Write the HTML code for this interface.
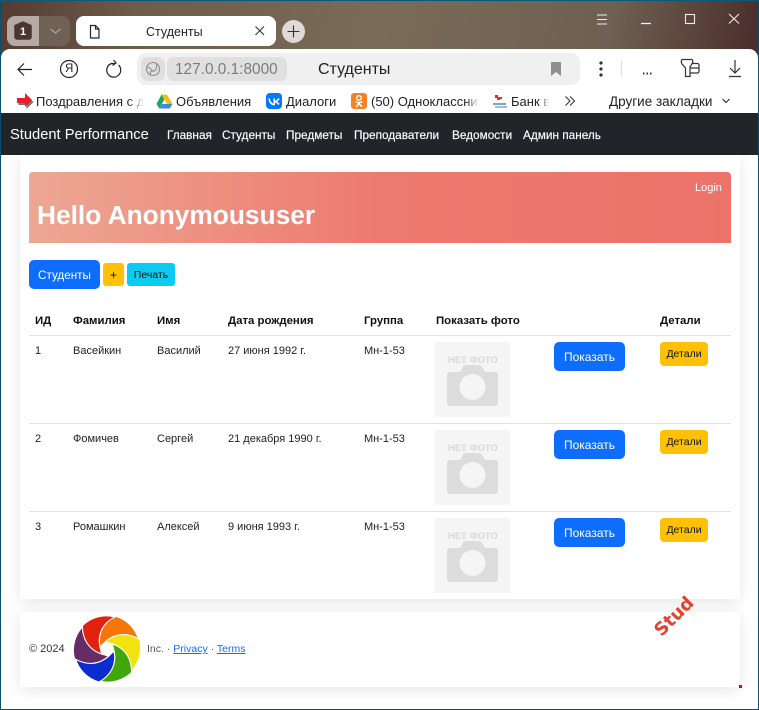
<!DOCTYPE html>
<html lang="ru"><head><meta charset="utf-8"><title>Студенты</title>
<style>
*{box-sizing:border-box}
html,body{margin:0;padding:0;width:759px;height:710px;overflow:hidden;background:#fff;font-family:"Liberation Sans","Noto Sans CJK JP",sans-serif;color:#212529}
.t{position:absolute;white-space:nowrap;line-height:16px}
.a{position:absolute}
.chrome{left:0;top:0;width:759px;height:60px;background:linear-gradient(100deg,#553a30 0%,#6e5c4c 18%,#7a6b58 50%,#6e6052 80%,#4a2c2a 100%)}
.tool{left:1px;top:49px;width:757px;height:64px;background:#fff;border-radius:9px 9px 0 0}
.nav{left:1px;top:113px;width:757px;height:42px;background:#212529}
.nl{color:#fff;font-size:11.8px;top:127px;-webkit-text-stroke:.15px #fff}
.card{background:#fff;box-shadow:0 3px 14px rgba(0,0,0,.1)}
.th{font-weight:bold;font-size:11.4px;color:#111;top:313px}
.td{font-size:11px;color:#222}
.line{left:29px;width:702px;height:1px;background:#dee2e6}
.btn{background:#0d6efd;color:#fff;border-radius:5px;text-align:center;font-size:12px}
.y{background:#ffc107;color:#111;border-radius:4px;text-align:center;font-size:10.5px}
.bk{font-size:13px;color:#222;top:94px}
.nf{font-size:9.3px;font-weight:bold;color:#d9d9d9;letter-spacing:.1px}
</style></head><body>
<div class="a chrome"></div>
<div class="a" style="left:7px;top:16px;width:32px;height:30px;background:#b5aaa5;border-radius:8px 0 0 8px"></div>
<div class="a" style="left:39px;top:16px;width:31px;height:30px;background:#6f6156;border-radius:0 8px 8px 0"></div>
<svg class="a" style="left:0;top:0" width="120" height="50"><path d="M15 25.500 23 22 31 25.500V37a2 2 0 0 1-2 2H17a2 2 0 0 1-2-2Z" fill="#4a362e" stroke="#4a362e" stroke-linejoin="round" stroke-width="1.5"/><path d="M50.500 29 55.500 33 60.500 29" fill="none" stroke="#a89e96" stroke-width="1.300"/></svg>
<span class="t" style="left:19px;top:24px;width:8px;text-align:center;color:#fff;font-size:11px;font-weight:bold">1</span>
<div class="a" style="left:76px;top:16px;width:200px;height:30px;background:#fff;border-radius:8px"></div>
<svg class="a" style="left:85px;top:22px" width="18" height="18" fill="none" stroke="#1f2933" stroke-width="1.200"><path d="M5.500 3.500H10.500L14 7V16H5.500ZM10.500 3.500V7H14"/></svg>
<span class="t" style="left:146px;top:24px;font-size:12.500px;color:#222">Студенты</span>
<svg class="a" style="left:254px;top:24px" width="12" height="14" stroke="#333" stroke-width="1.100"><path d="M1.500 2.500 10 11M10 2.500 1.500 11"/></svg>
<div class="a" style="left:282px;top:20px;width:23px;height:23px;border-radius:50%;background:#dfdad6"></div>
<svg class="a" style="left:282px;top:20px" width="23" height="23" stroke="#333" stroke-width="1.100"><path d="M11.500 5.500V17.500M5.500 11.500H17.500"/></svg>
<svg class="a" style="left:590px;top:8px" width="165" height="24" fill="none" stroke="#f2eeea" stroke-width="1.100"><path d="M7 7H17M7 11.500H17M7 16H17"/><path d="M51 15.500H61" stroke-width="1.300"/><rect x="95.500" y="6.500" width="9" height="9"/><path d="M139 6 149 15.500M149 6 139 15.500"/></svg>

<div class="a tool"></div>
<svg class="a" style="left:14px;top:58px" width="24" height="24" fill="none" stroke="#222" stroke-width="1.200"><path d="M4.500 11.500H18M10 5.500 4 11.500 10 17.500"/></svg>
<svg class="a" style="left:58px;top:58px" width="22" height="22" fill="none" stroke="#222" stroke-width="1.200"><circle cx="11" cy="11" r="8.500"/></svg>
<span class="t" style="left:65px;top:61px;font-size:11.500px;color:#222">Я</span>
<svg class="a" style="left:102px;top:58px" width="24" height="24" fill="none" stroke="#222" stroke-width="1.200"><path d="M16.500 7A7 7 0 1 1 9.500 5.500L12.500 5.500M11.500 2 14 5 10.500 7.500"/></svg>
<div class="a" style="left:137px;top:53px;width:443px;height:32px;background:#f0f0f0;border-radius:9px"></div>
<div class="a" style="left:141px;top:57px;width:24px;height:24px;background:#dfdfdf;border-radius:7px"></div>
<svg class="a" style="left:141px;top:57px" width="24" height="24" fill="none" stroke="#8d8d8d" stroke-width="1.100"><circle cx="12" cy="12" r="6.500"/><path d="M6 10C9 10 10 13 12 14S17 10 15 6M9.500 18C9 15 9.500 14 12 14"/></svg>
<div class="a" style="left:167px;top:57px;width:120px;height:24px;background:#e0e0e0;border-radius:7px"></div>
<span class="t" style="left:175px;top:62px;font-size:15.400px;color:#7c7c7c">127.0.0.1:8000</span>
<span class="t" style="left:318px;top:62px;font-size:16px;color:#222">Студенты</span>
<svg class="a" style="left:551px;top:62px" width="11" height="14"><path d="M0 0H10V14L5 10 0 14Z" fill="#8f8f8f"/></svg>
<svg class="a" style="left:590px;top:55px" width="165" height="30" fill="none" stroke="#333" stroke-width="1.200"><circle cx="11" cy="8" r="1" fill="#333"/><circle cx="11" cy="14" r="1" fill="#333"/><circle cx="11" cy="20" r="1" fill="#333"/><path d="M31.500 6V22" stroke="#ddd"/><path d="M53 18.500H54.500M56.500 18.500H58M60 18.500H61.500" stroke-width="2"/><path d="M92.500 4.500H101.500C103 4.500 103 6 102.500 8L100 12V21.500H95.500V13L92 9C91 7 91 4.500 92.500 4.500Z"/><path d="M101.500 8.500H107.500A1.500 1.500 0 0 1 109 10V16.500A1.500 1.500 0 0 1 107.500 18H100M100 13H109"/><path d="M145 5V18M140 13 145 18 150 13M139 21.500H151"/></svg>

<svg class="a" style="left:17px;top:93px" width="18" height="17"><path d="M0 5H8V0L15 7 8 14V10H0Z" fill="#777" transform="translate(1.500 2)"/><path d="M0 5H8V0L15 7 8 14V10H0Z" fill="#ee1c25"/></svg>
<span class="t bk" style="left:36px;width:108px;overflow:hidden;-webkit-mask-image:linear-gradient(90deg,#000 85%,transparent)">Поздравления с днём</span>
<svg class="a" style="left:156px;top:94px" width="17" height="15"><path d="M5.500 0.500H11L16.500 10H11Z" fill="#fbbc04"/><path d="M5.500 0.500 0.500 10 3.300 14.500 8.300 5.500Z" fill="#1fa463"/><path d="M3.300 14.500H13.800L16.500 10H6Z" fill="#4285f4"/></svg>
<span class="t bk" style="left:176px">Объявления</span>
<svg class="a" style="left:266px;top:93px" width="16" height="16"><rect width="16" height="16" rx="4" fill="#0077ff"/><path d="M3 5.500C3.500 9 5.500 11.500 8.200 11.500V5.500M13 5.500C12 7.300 10.500 8.300 8.200 8.500C10.500 8.800 12 10 13 11.500" fill="none" stroke="#fff" stroke-width="1.600"/></svg>
<span class="t bk" style="left:286px">Диалоги</span>
<svg class="a" style="left:351px;top:93px" width="16" height="16"><rect width="16" height="16" rx="3" fill="#f58220"/><circle cx="8" cy="5" r="2.300" fill="none" stroke="#fff" stroke-width="1.400"/><path d="M4.500 8.500C6.500 10 9.500 10 11.500 8.500M8 9.800V10.500M5 14 8 10.500 11 14" fill="none" stroke="#fff" stroke-width="1.400"/></svg>
<span class="t bk" style="left:371px;width:108px;overflow:hidden;-webkit-mask-image:linear-gradient(90deg,#000 88%,transparent)">(50) Одноклассники</span>
<svg class="a" style="left:492px;top:93px" width="16" height="16"><rect x="1" y="10" width="13" height="2" fill="#7fa6c8"/><rect x="3" y="13" width="12" height="2" fill="#9fc0da"/><path d="M3 2H6V4H8V7H5V5H3ZM8 4H10V6H8Z" fill="#e0301e"/></svg>
<span class="t bk" style="left:511px;width:38px;overflow:hidden;-webkit-mask-image:linear-gradient(90deg,#000 75%,transparent)">Банк в</span>
<svg class="a" style="left:563px;top:94px" width="14" height="14" fill="none" stroke="#333" stroke-width="1.100"><path d="M2.500 2.500 7 7 2.500 11.500M7 2.500 11.500 7 7 11.500"/></svg>
<span class="t bk" style="left:609px;font-size:13.500px">Другие закладки</span>
<svg class="a" style="left:720px;top:96px" width="12" height="10" fill="none" stroke="#333" stroke-width="1.200"><path d="M2.500 3 6 6.500 9.500 3"/></svg>

<div class="a nav"></div>
<span class="t" style="left:10px;top:127px;font-size:14.700px;color:#fff">Student Performance</span>
<span class="t nl" style="left:167px">Главная</span>
<span class="t nl" style="left:222px">Студенты</span>
<span class="t nl" style="left:286px">Предметы</span>
<span class="t nl" style="left:354px">Преподаватели</span>
<span class="t nl" style="left:452px">Ведомости</span>
<span class="t nl" style="left:523px">Админ панель</span>

<div class="a card" style="left:20px;top:155px;width:720px;height:444px"></div>
<div class="a" style="left:29px;top:172px;width:702px;height:71px;background:linear-gradient(90deg,#eda794 0%,#ed7a6e 50%,#ec7369 100%);border-radius:4px 4px 0 0"></div>
<span class="t" style="left:695px;top:180px;font-size:11px;color:#fff">Login</span>
<span class="t" style="left:37px;top:199px;font-size:26.300px;line-height:32px;font-weight:bold;color:#fff">Hello Anonymoususer</span>

<div class="a btn" style="left:29px;top:260px;width:71px;height:29px;line-height:32px;font-size:11.700px">Студенты</div>
<div class="a y" style="left:103px;top:263px;width:21px;height:23px;line-height:24px;border-radius:3px;font-size:12px">+</div>
<div class="a y" style="left:127px;top:263px;width:48px;height:23px;line-height:24px;background:#0dcaf0;border-radius:3px">Печать</div>

<span class="t th" style="left:35px">ИД</span>
<span class="t th" style="left:73px">Фамилия</span>
<span class="t th" style="left:157px">Имя</span>
<span class="t th" style="left:228px">Дата рождения</span>
<span class="t th" style="left:364px">Группа</span>
<span class="t th" style="left:436px">Показать фото</span>
<span class="t th" style="left:660px">Детали</span>

<div class="a line" style="top:335px"></div>
<div class="a line" style="top:423px"></div>
<div class="a line" style="top:511px"></div>

<span class="t td" style="left:35px;top:343px">1</span>
<span class="t td" style="left:73px;top:343px">Васейкин</span>
<span class="t td" style="left:157px;top:343px">Василий</span>
<span class="t td" style="left:228px;top:343px">27 июня 1992 г.</span>
<span class="t td" style="left:364px;top:343px">Мн-1-53</span>
<div class="a" style="left:435px;top:342px;width:75px;height:75px;background:#f5f5f5"></div>
<span class="t nf" style="left:448px;top:352px">НЕТ ФОТО</span>
<svg class="a" style="left:447px;top:364px" width="52" height="43"><path d="M3 8H13L16 3Q17 1 19 1H32Q34 1 35 3L38 8H48A3 3 0 0 1 51 11V39A3 3 0 0 1 48 42H3A3 3 0 0 1 0 39V11A3 3 0 0 1 3 8Z" fill="#dcdcdc"/><circle cx="25.500" cy="23" r="13" fill="#f5f5f5"/></svg>
<div class="a btn" style="left:554px;top:342px;width:71px;height:29px;line-height:31px">Показать</div>
<div class="a y" style="left:660px;top:342px;width:48px;height:24px;line-height:25px">Детали</div>

<span class="t td" style="left:35px;top:431px">2</span>
<span class="t td" style="left:73px;top:431px">Фомичев</span>
<span class="t td" style="left:157px;top:431px">Сергей</span>
<span class="t td" style="left:228px;top:431px">21 декабря 1990 г.</span>
<span class="t td" style="left:364px;top:431px">Мн-1-53</span>
<div class="a" style="left:435px;top:430px;width:75px;height:75px;background:#f5f5f5"></div>
<span class="t nf" style="left:448px;top:440px">НЕТ ФОТО</span>
<svg class="a" style="left:447px;top:452px" width="52" height="43"><path d="M3 8H13L16 3Q17 1 19 1H32Q34 1 35 3L38 8H48A3 3 0 0 1 51 11V39A3 3 0 0 1 48 42H3A3 3 0 0 1 0 39V11A3 3 0 0 1 3 8Z" fill="#dcdcdc"/><circle cx="25.500" cy="23" r="13" fill="#f5f5f5"/></svg>
<div class="a btn" style="left:554px;top:430px;width:71px;height:29px;line-height:31px">Показать</div>
<div class="a y" style="left:660px;top:430px;width:48px;height:24px;line-height:25px">Детали</div>

<span class="t td" style="left:35px;top:519px">3</span>
<span class="t td" style="left:73px;top:519px">Ромашкин</span>
<span class="t td" style="left:157px;top:519px">Алексей</span>
<span class="t td" style="left:228px;top:519px">9 июня 1993 г.</span>
<span class="t td" style="left:364px;top:519px">Мн-1-53</span>
<div class="a" style="left:435px;top:518px;width:75px;height:75px;background:#f5f5f5"></div>
<span class="t nf" style="left:448px;top:528px">НЕТ ФОТО</span>
<svg class="a" style="left:447px;top:540px" width="52" height="43"><path d="M3 8H13L16 3Q17 1 19 1H32Q34 1 35 3L38 8H48A3 3 0 0 1 51 11V39A3 3 0 0 1 48 42H3A3 3 0 0 1 0 39V11A3 3 0 0 1 3 8Z" fill="#dcdcdc"/><circle cx="25.500" cy="23" r="13" fill="#f5f5f5"/></svg>
<div class="a btn" style="left:554px;top:518px;width:71px;height:29px;line-height:31px">Показать</div>
<div class="a y" style="left:660px;top:518px;width:48px;height:24px;line-height:25px">Детали</div>

<div class="a card" style="left:20px;top:612px;width:720px;height:75px"></div>
<span class="t" style="left:29px;top:641px;font-size:11px;color:#333">© 2024</span>
<svg class="a" style="left:72px;top:614px" width="70" height="70" viewBox="-35 -35 70 70">
<g stroke="#fff" stroke-width="1.100" stroke-linejoin="round">
<path d="M-7 -2C-10 -16 -3 -27 8 -33A34 34 0 0 1 31.700 -9C21.900 -16 8.900 -16.700 -1.800 -7.100Z" fill="#f7760c"/>
<path d="M-7 -2C-10 -16 -3 -27 8 -33A34 34 0 0 1 31.700 -9C21.900 -16 8.900 -16.700 -1.800 -7.100Z" fill="#f1e30f" transform="rotate(60)"/>
<path d="M-7 -2C-10 -16 -3 -27 8 -33A34 34 0 0 1 31.700 -9C21.900 -16 8.900 -16.700 -1.800 -7.100Z" fill="#3fa60c" transform="rotate(120)"/>
<path d="M-7 -2C-10 -16 -3 -27 8 -33A34 34 0 0 1 31.700 -9C21.900 -16 8.900 -16.700 -1.800 -7.100Z" fill="#0b2ccf" transform="rotate(180)"/>
<path d="M-7 -2C-10 -16 -3 -27 8 -33A34 34 0 0 1 31.700 -9C21.900 -16 8.900 -16.700 -1.800 -7.100Z" fill="#672c66" transform="rotate(240)"/>
<path d="M-7 -2C-10 -16 -3 -27 8 -33A34 34 0 0 1 31.700 -9C21.900 -16 8.900 -16.700 -1.800 -7.100Z" fill="#e2220f" transform="rotate(300)"/>
</g></svg>
<span class="t" style="left:147px;top:641px;font-size:10.500px;color:#555">Inc. · <span style="color:#0d6efd;text-decoration:underline">Privacy</span> · <span style="color:#0d6efd;text-decoration:underline">Terms</span></span>

<span class="t" style="left:651px;top:607px;font-family:'DejaVu Sans',sans-serif;font-size:18px;line-height:20px;font-weight:bold;color:#e8402f;transform:rotate(-45deg);transform-origin:50% 50%">Stud</span>
<div class="a" style="left:739px;top:685px;width:3px;height:3px;background:#d00"></div>

<div class="a" style="left:0;top:0;width:759px;height:1px;background:#0c5a78"></div>
<div class="a" style="left:0;top:0;width:1px;height:710px;background:#0c4f6c"></div>
<div class="a" style="left:758px;top:0;width:1px;height:710px;background:#0c4f6c"></div>
<div class="a" style="left:0;top:709px;width:759px;height:1px;background:#0c4f6c"></div>
</body></html>
